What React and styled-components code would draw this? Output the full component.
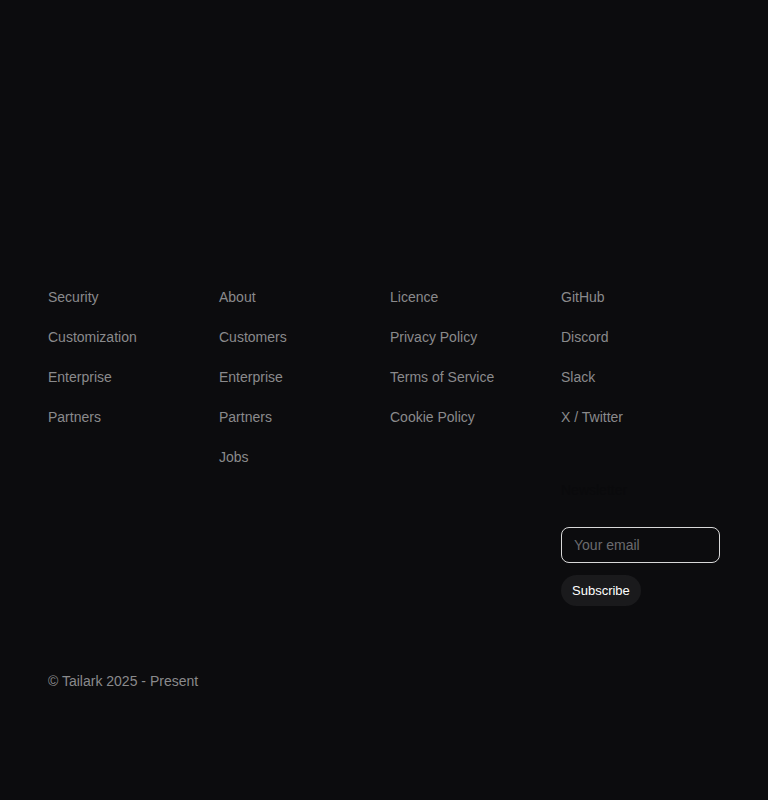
import styled, { createGlobalStyle } from 'styled-components';

const columns = [
    { title: "Product", links: ["Security", "Customization", "Enterprise", "Partners"] },
    { title: "Company", links: ["About", "Customers", "Enterprise", "Partners", "Jobs"] },
    { title: "Legal", links: ["Licence", "Privacy Policy", "Terms of Service", "Cookie Policy"] },
    { title: "Community", links: ["GitHub", "Discord", "Slack", "X / Twitter"] },
];

function App() {
    return (
        <>
            <GlobalStyle />
            <Page>
                <Footer>
                    <Grid>
                        {columns.map((col, i) => (
                            <Column key={col.title}>
                                <Heading>{col.title}</Heading>
                                <LinkList>
                                    {col.links.map(link => (
                                        <li key={link}><FooterLink href="#">{link}</FooterLink></li>
                                    ))}
                                </LinkList>
                                {i === 3 && (
                                    <Newsletter onSubmit={e => e.preventDefault()}>
                                        <Label htmlFor="email">Newsletter</Label>
                                        <Input id="email" type="email" placeholder="Your email" />
                                        <Button type="submit">Subscribe</Button>
                                    </Newsletter>
                                )}
                            </Column>
                        ))}
                    </Grid>
                    <Copyright>© Tailark 2025 - Present</Copyright>
                </Footer>
            </Page>
        </>
    );
}

export default App;

const GlobalStyle = createGlobalStyle`
    html, body {
        margin: 0;
        padding: 0;
        background: #0c0c0e;
    }
    body {
        font-family: "Liberation Sans", Arial, sans-serif;
        -webkit-font-smoothing: antialiased;
    }
    * {
        box-sizing: border-box;
    }
`

const Page = styled.div`
    min-height: 800px;
    background: #0c0c0e;
`

const Footer = styled.footer`
    padding: 247px 48px 109px;
`

const Grid = styled.div`
    display: grid;
    grid-template-columns: repeat(4, 1fr);
    column-gap: 12px;
`

const Column = styled.div`
    display: flex;
    flex-direction: column;
`

const Heading = styled.span`
    font-size: 14px;
    line-height: 20px;
    font-weight: 500;
    color: #0c0c0e;
`

const LinkList = styled.ul`
    display: flex;
    flex-direction: column;
    gap: 20px;
    margin: 20px 0 0;
    padding: 0;
    list-style: none;
`

const FooterLink = styled.a`
    display: block;
    font-size: 14px;
    line-height: 20px;
    color: #8a8a8c;
    text-decoration: none;

    &:hover {
        color: #ffffff;
    }
`

const Newsletter = styled.form`
    display: flex;
    flex-direction: column;
    align-items: flex-start;
    margin-top: 53px;
`

const Label = styled.label`
    font-size: 14px;
    line-height: 20px;
    color: #0a0a0c;
    margin-bottom: 27px;
`

const Input = styled.input`
    width: 100%;
    height: 36px;
    padding: 0 12px;
    font-family: inherit;
    font-size: 14px;
    color: #ffffff;
    background: transparent;
    border: 1px solid #d8d8d8;
    border-radius: 8px;
    outline: none;

    &::placeholder {
        color: #6b6b6e;
    }
`

const Button = styled.button`
    margin-top: 12px;
    height: 31px;
    padding: 0 11px;
    font-family: inherit;
    font-size: 13px;
    color: #ffffff;
    background: #1a1a1c;
    border: none;
    border-radius: 16px;
    cursor: pointer;
`

const Copyright = styled.p`
    margin: 65px 0 0;
    font-size: 14px;
    line-height: 20px;
    color: #8a8a8c;
`
